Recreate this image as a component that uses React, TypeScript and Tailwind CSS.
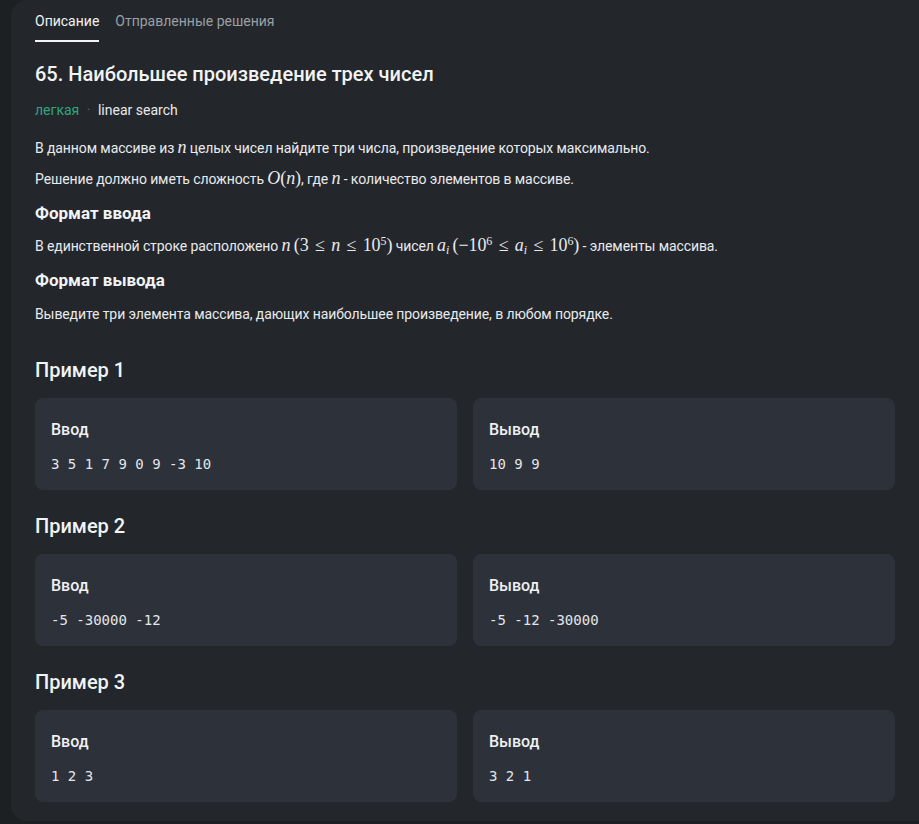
const sans = "font-['Roboto','Noto_Sans',sans-serif]";

function M({ children }: { children: React.ReactNode }) {
  return (
    <span className="font-['Liberation_Serif','DejaVu_Serif',serif] text-[18px] italic leading-none">
      {children}
    </span>
  );
}

function R({ children }: { children: React.ReactNode }) {
  return (
    <span className="font-['Liberation_Serif','DejaVu_Serif',serif] text-[18px] not-italic leading-none">
      {children}
    </span>
  );
}

const examples = [
  { input: "3 5 1 7 9 0 9 -3 10", output: "10 9 9" },
  { input: "-5 -30000 -12", output: "-5 -12 -30000" },
  { input: "1 2 3", output: "3 2 1" },
];

function Card({ title, value }: { title: string; value: string }) {
  return (
    <div className="flex-1 rounded-lg bg-[#2d3139] px-4 pb-4 pt-5">
      <div className="text-[16px] font-medium leading-6 text-[#eef0f3]">{title}</div>
      <pre className="mt-3 font-['DejaVu_Sans_Mono',monospace] text-[14px] leading-5 text-[#e3e6ea]">
        {value}
      </pre>
    </div>
  );
}

export default function App() {
  return (
    <div className={`min-h-[824px] bg-[#1d2023] pl-[11px] ${sans}`}>
      <div className="rounded-l-2xl bg-[#23272b] px-6 pb-[19px] text-[#e8eaed]">
        {/* tabs */}
        <div className="flex gap-4 text-[14px] leading-5">
          <div className="border-b-2 border-[#f1f3f4] pb-[9px] pt-[11px] text-[#f1f3f4]">Описание</div>
          <div className="pb-[9px] pt-[11px] text-[#9aa0a6]">Отправленные решения</div>
        </div>

        <h1 className="mt-[18px] text-[20px] font-medium leading-7 text-[#f1f3f4]">
          65. Наибольшее произведение трех чисел
        </h1>

        <div className="mt-3 flex items-center gap-2 text-[14px] leading-5">
          <span className="text-[#2fa57f]">легкая</span>
          <span className="text-[8px] text-[#5f6368]">•</span>
          <span className="text-[#e8eaed]">linear search</span>
        </div>

        <p className="mt-[18px] text-[14px] leading-5 tracking-[-0.1px]">
          В данном массиве из <M>n</M> целых чисел найдите три числа, произведение которых максимально.
        </p>
        <p className="mt-[11px] text-[14px] leading-5 tracking-[-0.1px]">
          Решение должно иметь сложность <M>O</M>
          <R>(</R>
          <M>n</M>
          <R>)</R>, где <M>n</M> - количество элементов в массиве.
        </p>

        <h3 className="mt-3 text-[17px] font-bold leading-6 text-[#f1f3f4]">Формат ввода</h3>
        <p className="mt-[11px] text-[14px] leading-5 tracking-[-0.1px]">
          В единственной строке расположено <M>n</M>{" "}
          <R>
            (3 <span className="px-0.5">≤</span> <i>n</i> <span className="px-0.5">≤</span> 10
            <sup className="text-[12px]">5</sup>)
          </R>{" "}
          чисел <M>a</M>
          <sub className="font-['Liberation_Serif',serif] text-[12px] italic">i</sub>{" "}
          <R>
            (−10<sup className="text-[12px]">6</sup> <span className="px-0.5">≤</span> <i>a</i>
            <sub className="text-[12px] italic">i</sub> <span className="px-0.5">≤</span> 10
            <sup className="text-[12px]">6</sup>)
          </R>{" "}
          - элементы массива.
        </p>

        <h3 className="mt-3 text-[17px] font-bold leading-6 text-[#f1f3f4]">Формат вывода</h3>
        <p className="mt-3 text-[14px] leading-5 tracking-[-0.1px]">
          Выведите три элемента массива, дающих наибольшее произведение, в любом порядке.
        </p>

        {examples.map((ex, i) => (
          <div key={i} className={i === 0 ? "mt-8" : "mt-[22px]"}>
            <h2 className="text-[20px] font-medium leading-7 text-[#f1f3f4]">Пример {i + 1}</h2>
            <div className="mt-3.5 flex gap-4">
              <Card title="Ввод" value={ex.input} />
              <Card title="Вывод" value={ex.output} />
            </div>
          </div>
        ))}
      </div>
    </div>
  );
}
